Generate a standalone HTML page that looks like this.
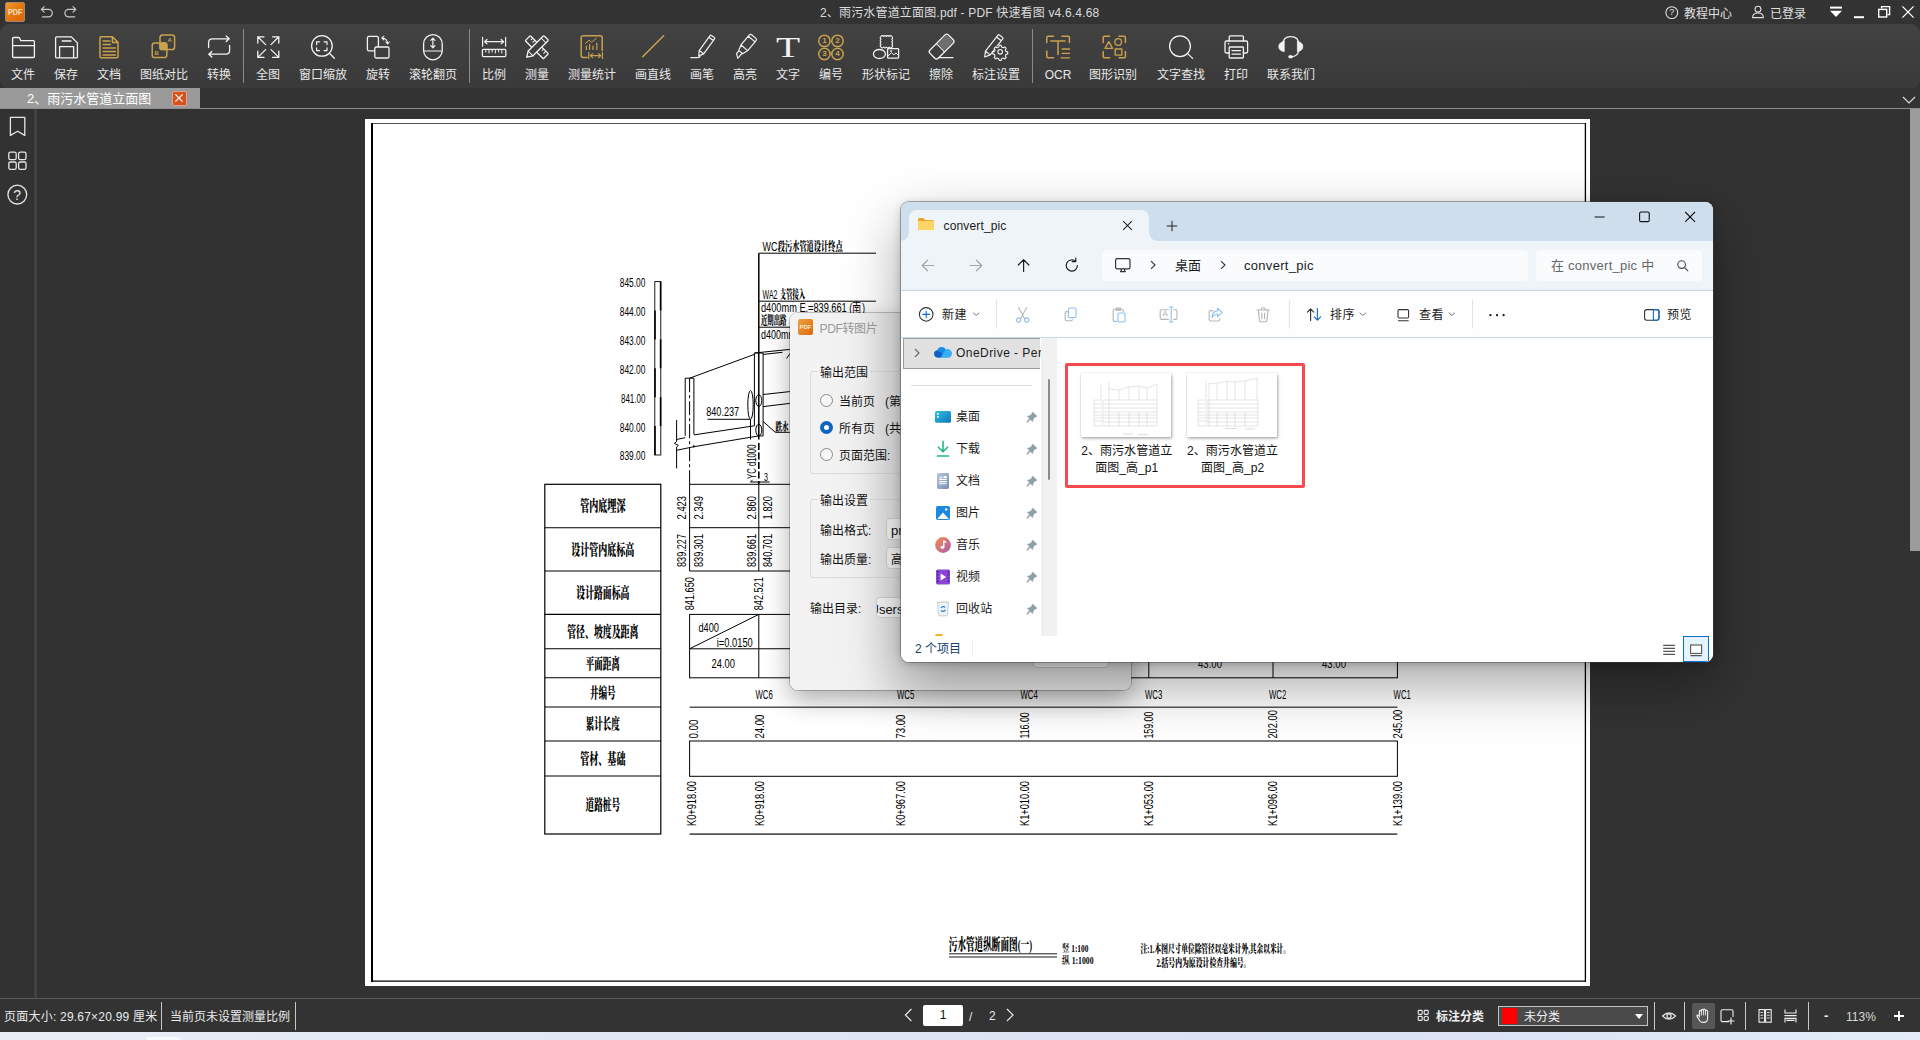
<!DOCTYPE html>
<html lang="zh-CN">
<head>
<meta charset="utf-8">
<title>PDF 快速看图</title>
<style>
*{box-sizing:border-box;margin:0;padding:0}
html,body{width:1920px;height:1040px;overflow:hidden;background:#323232}
body{position:relative;font-family:"Liberation Sans","Noto Sans CJK SC",sans-serif;font-size:12px;color:#e6e6e6}
.abs{position:absolute}
.t{position:absolute;white-space:nowrap;line-height:1}
svg{position:absolute;overflow:visible}
/* ---------- app chrome ---------- */
#titlebar{left:0;top:0;width:1920px;height:25px;background:#333333}
#toolbar{left:0;top:24px;width:1920px;height:64px;background:linear-gradient(#424242,#3a3a3a);border-radius:9px 9px 9px 9px}
#tabbar{left:0;top:88px;width:1920px;height:20px;background:#333333}
#tab{left:0;top:88px;width:200px;height:20px;background:#9a9a9a}
#tabline{left:0;top:108px;width:1920px;height:1px;background:#8e8e8e}
#sidebar{left:0;top:109px;width:34px;height:890px;background:#323232}
#sidesep{left:34px;top:109px;width:3px;height:890px;background:#414141}
#vscroll{left:1910px;top:109px;width:10px;height:442px;background:#9b9b9b}
#page{left:365px;top:119px;width:1225px;height:867px;background:#fff}
#statusline{left:0;top:998px;width:1920px;height:1px;background:#5a5a5a}
#statusbar{left:0;top:999px;width:1920px;height:33px;background:#333333}
#taskstrip{left:0;top:1032px;width:1920px;height:8px;background:linear-gradient(90deg,#e9eef6 0%,#dfe6f5 40%,#d9e1f4 70%,#e3ecf8 100%)}
.tbl{position:absolute;top:68.5px;font-size:12px;color:#e8e8e8;white-space:nowrap;line-height:12px;transform:translateX(-50%)}
.tsep{position:absolute;top:29px;width:1px;height:54px;background:#8a8a8a}
.ssep{position:absolute;top:1002px;width:1px;height:28px;background:#c8c8c8}
</style>
</head>
<body>
<!-- ===== APP CHROME ===== -->
<div id="titlebar" class="abs"></div>
<div id="toolbar" class="abs"></div>
<div id="tabbar" class="abs"></div>
<div id="tab" class="abs"></div>
<div id="tabline" class="abs"></div>
<div id="sidebar" class="abs"></div>
<div id="sidesep" class="abs"></div>
<div id="vscroll" class="abs"></div>
<div id="page" class="abs"></div>
<!-- ===== CAD DRAWING ===== -->
<svg style="left:0;top:0" width="1920" height="1040" viewBox="0 0 1920 1040" fill="none" stroke="#000" stroke-width="1">
<path d="M371 123.5 H1586" stroke="#555" stroke-width="1"/>
<path d="M372 123 V982" stroke-width="2"/>
<path d="M371 981.2 H1586 M1585.4 982 V123" stroke-width="1.3"/>
<rect x="654.8" y="281.6" width="6" height="173.4" stroke-width="0.9"/>
<path d="M660.6 281.6 V310.5" stroke-width="1.6"/>
<path d="M655.0 310.5 V339.4" stroke-width="1.6"/>
<path d="M660.6 339.4 V368.3" stroke-width="1.6"/>
<path d="M655.0 368.3 V397.2" stroke-width="1.6"/>
<path d="M660.6 397.2 V426.1" stroke-width="1.6"/>
<path d="M655.0 426.1 V455.0" stroke-width="1.6"/>
<text x="645.4" y="287.0" font-family="Liberation Sans, sans-serif" font-size="13.0" text-anchor="end" textLength="25.6" lengthAdjust="spacingAndGlyphs" fill="#000" stroke="none">845.00</text>
<text x="645.4" y="315.9" font-family="Liberation Sans, sans-serif" font-size="13.0" text-anchor="end" textLength="25.6" lengthAdjust="spacingAndGlyphs" fill="#000" stroke="none">844.00</text>
<text x="645.4" y="344.8" font-family="Liberation Sans, sans-serif" font-size="13.0" text-anchor="end" textLength="25.6" lengthAdjust="spacingAndGlyphs" fill="#000" stroke="none">843.00</text>
<text x="645.4" y="373.7" font-family="Liberation Sans, sans-serif" font-size="13.0" text-anchor="end" textLength="25.6" lengthAdjust="spacingAndGlyphs" fill="#000" stroke="none">842.00</text>
<text x="645.4" y="402.6" font-family="Liberation Sans, sans-serif" font-size="13.0" text-anchor="end" textLength="24.4" lengthAdjust="spacingAndGlyphs" fill="#000" stroke="none">841.00</text>
<text x="645.4" y="431.5" font-family="Liberation Sans, sans-serif" font-size="13.0" text-anchor="end" textLength="25.6" lengthAdjust="spacingAndGlyphs" fill="#000" stroke="none">840.00</text>
<text x="645.4" y="460.4" font-family="Liberation Sans, sans-serif" font-size="13.0" text-anchor="end" textLength="25.6" lengthAdjust="spacingAndGlyphs" fill="#000" stroke="none">839.00</text>
<path d="M758.8 253.2 H876 M758.8 301.2 H876 M758.8 327.2 H876" stroke-width="1"/>
<text x="762.5" y="250.6" font-family="Liberation Sans, sans-serif" font-size="13.0" text-anchor="start" textLength="15.0" lengthAdjust="spacingAndGlyphs" fill="#000" stroke="none">WC</text>
<text x="777.8" y="250.6" font-family="Liberation Serif, Noto Serif CJK SC, serif" font-weight="900" font-size="12.5" text-anchor="start" textLength="64.8" lengthAdjust="spacingAndGlyphs" fill="#000" stroke="none">段污水管道设计终点</text>
<text x="762.5" y="299.2" font-family="Liberation Sans, sans-serif" font-size="13.0" text-anchor="start" textLength="15.0" lengthAdjust="spacingAndGlyphs" fill="#000" stroke="none">WA2</text>
<text x="779.8" y="299.2" font-family="Liberation Serif, Noto Serif CJK SC, serif" font-weight="900" font-size="12.5" text-anchor="start" textLength="25.4" lengthAdjust="spacingAndGlyphs" fill="#000" stroke="none">支管接入</text>
<text x="761.0" y="312.4" font-family="Liberation Sans, sans-serif" font-size="12.5" text-anchor="start" textLength="104.0" lengthAdjust="spacingAndGlyphs" fill="#000" stroke="none">d400mm E.=839.661 (南)</text>
<text x="761.0" y="325.0" font-family="Liberation Serif, Noto Serif CJK SC, serif" font-weight="900" font-size="12.0" text-anchor="start" textLength="25.5" lengthAdjust="spacingAndGlyphs" fill="#000" stroke="none">近期出路</text>
<text x="761.0" y="338.8" font-family="Liberation Sans, sans-serif" font-size="12.5" text-anchor="start" textLength="35.0" lengthAdjust="spacingAndGlyphs" fill="#000" stroke="none">d400mm</text>
<path d="M758.8 253.2 V439.5" stroke-width="1.5"/>
<path d="M758.8 443 V484" stroke-width="1.6" stroke-dasharray="7 2.5"/>
<path d="M685.2 378.2 H693.9 M685.2 378.2 V435.9 M693.9 378.2 V434.4" />
<path d="M689.6 378.2 V484.3" stroke-width="1" stroke-dasharray="14 3 3 3"/>
<path d="M689.6 484.3 V571"/>
<path d="M689.6 378.2 L754.4 354.4 M754.4 353 L789.8 349.4 M763.1 354.4 L782.5 352.3 M786.6 358.4 L790 353.6"/>
<path d="M754.4 353 H763.1 M754.4 353 V425.8 M763.1 353 V435.9"/>
<path d="M693.9 434.9 L754.4 425.8 M676.6 450.3 L693.9 446.7 L758.8 435.9 H763.1 M676.6 439.5 L685.2 437.7 M693.9 444.8 V447.6"/>
<path d="M676.6 420 V441.6 L674.4 443.4 L678.4 445.4 L676.6 447 V468.4"/>
<path d="M707.6 419.3 H750.4 M750.5 419.3 V439.5"/>
<ellipse cx="750.5" cy="404.9" rx="2.7" ry="14.4"/>
<ellipse cx="758.8" cy="400.6" rx="3" ry="5.8"/><ellipse cx="758.8" cy="430.1" rx="3" ry="5.8"/>
<path d="M763.1 394.5 L789.8 391.6 M763.1 406.6 L789.8 403.4 M763.1 421.5 L775.3 432.3 H789.8"/>
<text x="706.2" y="416.4" font-family="Liberation Sans, sans-serif" font-size="13.0" text-anchor="start" textLength="33.0" lengthAdjust="spacingAndGlyphs" fill="#000" stroke="none">840.237</text>
<text x="775.6" y="431.4" font-family="Liberation Serif, Noto Serif CJK SC, serif" font-weight="900" font-size="11.5" text-anchor="start" textLength="13.0" lengthAdjust="spacingAndGlyphs" fill="#000" stroke="none">跌水</text>
<text x="756.2" y="479.0" font-family="Liberation Sans, sans-serif" font-size="12.5" text-anchor="start" textLength="34.5" lengthAdjust="spacingAndGlyphs" fill="#000" stroke="none" transform="rotate(-90 756.2 479.0)">YC d1000</text>
<text x="764.0" y="480.6" font-family="Liberation Sans, sans-serif" font-size="11.0" text-anchor="start" textLength="4.0" lengthAdjust="spacingAndGlyphs" fill="#000" stroke="none">3</text>
<path d="M750.4 482 H769.6 M750.4 482 L752.6 479.8"/>
<rect x="544.8" y="484.3" width="116" height="349.7" stroke-width="1.2"/>
<path d="M544.8 527.7 H660.8 M544.8 571.0 H660.8 M544.8 614.4 H660.8 M544.8 648.8 H660.8 M544.8 677.8 H660.8 M544.8 707.0 H660.8 M544.8 741.0 H660.8 M544.8 776.0 H660.8" stroke-width="1.1"/>
<text x="602.8" y="511.2" font-family="Liberation Serif, Noto Serif CJK SC, serif" font-weight="900" font-size="14.5" text-anchor="middle" textLength="45.3" lengthAdjust="spacingAndGlyphs" fill="#000" stroke="none">管内底埋深</text>
<text x="602.8" y="554.6" font-family="Liberation Serif, Noto Serif CJK SC, serif" font-weight="900" font-size="14.5" text-anchor="middle" textLength="63.0" lengthAdjust="spacingAndGlyphs" fill="#000" stroke="none">设计管内底标高</text>
<text x="602.8" y="597.9" font-family="Liberation Serif, Noto Serif CJK SC, serif" font-weight="900" font-size="14.5" text-anchor="middle" textLength="53.0" lengthAdjust="spacingAndGlyphs" fill="#000" stroke="none">设计路面标高</text>
<text x="602.8" y="636.8" font-family="Liberation Serif, Noto Serif CJK SC, serif" font-weight="900" font-size="14.5" text-anchor="middle" textLength="71.3" lengthAdjust="spacingAndGlyphs" fill="#000" stroke="none">管径、坡度及距离</text>
<text x="602.8" y="668.5" font-family="Liberation Serif, Noto Serif CJK SC, serif" font-weight="900" font-size="14.5" text-anchor="middle" textLength="34.0" lengthAdjust="spacingAndGlyphs" fill="#000" stroke="none">平面距离</text>
<text x="602.8" y="697.6" font-family="Liberation Serif, Noto Serif CJK SC, serif" font-weight="900" font-size="14.5" text-anchor="middle" textLength="25.5" lengthAdjust="spacingAndGlyphs" fill="#000" stroke="none">井编号</text>
<text x="602.8" y="729.2" font-family="Liberation Serif, Noto Serif CJK SC, serif" font-weight="900" font-size="14.5" text-anchor="middle" textLength="34.0" lengthAdjust="spacingAndGlyphs" fill="#000" stroke="none">累计长度</text>
<text x="602.8" y="763.7" font-family="Liberation Serif, Noto Serif CJK SC, serif" font-weight="900" font-size="14.5" text-anchor="middle" textLength="45.3" lengthAdjust="spacingAndGlyphs" fill="#000" stroke="none">管材、基础</text>
<text x="602.8" y="810.2" font-family="Liberation Serif, Noto Serif CJK SC, serif" font-weight="900" font-size="14.5" text-anchor="middle" textLength="34.6" lengthAdjust="spacingAndGlyphs" fill="#000" stroke="none">道路桩号</text>
<path d="M689.6 484.3 H1397.4 M689.6 527.7 H1397.4 M689.6 571 H1397.4"/>
<path d="M900.4 439.5 V571 M1024.5 439.5 V571 M1148.8 439.5 V571 M1273.0 439.5 V571 M1397.4 439.5 V571"/>
<path d="M758.8 484.3 V571"/>
<rect x="689.6" y="614.4" width="707.8" height="63.4"/>
<path d="M689.6 648.8 H758.8 L1397.4 647.2 M689.6 648.8 L758.8 614.4 M758.8 614.4 V677.8 M900.4 614.4 V677.8 M1024.5 614.4 V677.8 M1148.8 614.4 V677.8 M1273.0 614.4 V677.8"/>
<text x="686.4" y="519.4" font-family="Liberation Sans, sans-serif" font-size="12.5" text-anchor="start" textLength="23.4" lengthAdjust="spacingAndGlyphs" fill="#000" stroke="none" transform="rotate(-90 686.4 519.4)">2.423</text>
<text x="702.8" y="519.4" font-family="Liberation Sans, sans-serif" font-size="12.5" text-anchor="start" textLength="23.4" lengthAdjust="spacingAndGlyphs" fill="#000" stroke="none" transform="rotate(-90 702.8 519.4)">2.349</text>
<text x="756.1" y="519.4" font-family="Liberation Sans, sans-serif" font-size="12.5" text-anchor="start" textLength="23.4" lengthAdjust="spacingAndGlyphs" fill="#000" stroke="none" transform="rotate(-90 756.1 519.4)">2.860</text>
<text x="771.9" y="519.4" font-family="Liberation Sans, sans-serif" font-size="12.5" text-anchor="start" textLength="23.4" lengthAdjust="spacingAndGlyphs" fill="#000" stroke="none" transform="rotate(-90 771.9 519.4)">1.820</text>
<text x="686.4" y="567.0" font-family="Liberation Sans, sans-serif" font-size="12.5" text-anchor="start" textLength="33.0" lengthAdjust="spacingAndGlyphs" fill="#000" stroke="none" transform="rotate(-90 686.4 567.0)">839.227</text>
<text x="702.8" y="567.0" font-family="Liberation Sans, sans-serif" font-size="12.5" text-anchor="start" textLength="33.0" lengthAdjust="spacingAndGlyphs" fill="#000" stroke="none" transform="rotate(-90 702.8 567.0)">839.301</text>
<text x="756.1" y="567.0" font-family="Liberation Sans, sans-serif" font-size="12.5" text-anchor="start" textLength="33.0" lengthAdjust="spacingAndGlyphs" fill="#000" stroke="none" transform="rotate(-90 756.1 567.0)">839.661</text>
<text x="771.9" y="567.0" font-family="Liberation Sans, sans-serif" font-size="12.5" text-anchor="start" textLength="33.0" lengthAdjust="spacingAndGlyphs" fill="#000" stroke="none" transform="rotate(-90 771.9 567.0)">840.701</text>
<text x="693.7" y="610.2" font-family="Liberation Sans, sans-serif" font-size="12.5" text-anchor="start" textLength="33.0" lengthAdjust="spacingAndGlyphs" fill="#000" stroke="none" transform="rotate(-90 693.7 610.2)">841.650</text>
<text x="763.4" y="610.2" font-family="Liberation Sans, sans-serif" font-size="12.5" text-anchor="start" textLength="33.0" lengthAdjust="spacingAndGlyphs" fill="#000" stroke="none" transform="rotate(-90 763.4 610.2)">842.521</text>
<text x="698.4" y="632.0" font-family="Liberation Sans, sans-serif" font-size="12.5" text-anchor="start" textLength="20.6" lengthAdjust="spacingAndGlyphs" fill="#000" stroke="none">d400</text>
<text x="716.8" y="646.8" font-family="Liberation Sans, sans-serif" font-size="12.5" text-anchor="start" textLength="36.0" lengthAdjust="spacingAndGlyphs" fill="#000" stroke="none">i=0.0150</text>
<text x="711.5" y="668.4" font-family="Liberation Sans, sans-serif" font-size="12.5" text-anchor="start" textLength="23.4" lengthAdjust="spacingAndGlyphs" fill="#000" stroke="none">24.00</text>
<text x="1198.0" y="668.4" font-family="Liberation Sans, sans-serif" font-size="12.5" text-anchor="start" textLength="24.0" lengthAdjust="spacingAndGlyphs" fill="#000" stroke="none">43.00</text>
<text x="1322.0" y="668.4" font-family="Liberation Sans, sans-serif" font-size="12.5" text-anchor="start" textLength="24.0" lengthAdjust="spacingAndGlyphs" fill="#000" stroke="none">43.00</text>
<text x="755.5" y="698.8" font-family="Liberation Sans, sans-serif" font-size="13.0" text-anchor="start" textLength="17.2" lengthAdjust="spacingAndGlyphs" fill="#000" stroke="none">WC6</text>
<text x="897.0" y="698.8" font-family="Liberation Sans, sans-serif" font-size="13.0" text-anchor="start" textLength="17.2" lengthAdjust="spacingAndGlyphs" fill="#000" stroke="none">WC5</text>
<text x="1020.5" y="698.8" font-family="Liberation Sans, sans-serif" font-size="13.0" text-anchor="start" textLength="17.2" lengthAdjust="spacingAndGlyphs" fill="#000" stroke="none">WC4</text>
<text x="1145.0" y="698.8" font-family="Liberation Sans, sans-serif" font-size="13.0" text-anchor="start" textLength="17.2" lengthAdjust="spacingAndGlyphs" fill="#000" stroke="none">WC3</text>
<text x="1269.0" y="698.8" font-family="Liberation Sans, sans-serif" font-size="13.0" text-anchor="start" textLength="17.2" lengthAdjust="spacingAndGlyphs" fill="#000" stroke="none">WC2</text>
<text x="1393.6" y="698.8" font-family="Liberation Sans, sans-serif" font-size="13.0" text-anchor="start" textLength="17.2" lengthAdjust="spacingAndGlyphs" fill="#000" stroke="none">WC1</text>
<path d="M689.6 707.3 H1397.4 M689.6 834.1 H1397.4" stroke="#555" stroke-width="1.6"/>
<rect x="689.6" y="741" width="707.8" height="35.3"/>
<text x="697.9" y="738.6" font-family="Liberation Sans, sans-serif" font-size="12.5" text-anchor="start" textLength="19.0" lengthAdjust="spacingAndGlyphs" fill="#000" stroke="none" transform="rotate(-90 697.9 738.6)">0.00</text>
<text x="763.9" y="738.6" font-family="Liberation Sans, sans-serif" font-size="12.5" text-anchor="start" textLength="24.0" lengthAdjust="spacingAndGlyphs" fill="#000" stroke="none" transform="rotate(-90 763.9 738.6)">24.00</text>
<text x="905.4" y="738.6" font-family="Liberation Sans, sans-serif" font-size="12.5" text-anchor="start" textLength="24.0" lengthAdjust="spacingAndGlyphs" fill="#000" stroke="none" transform="rotate(-90 905.4 738.6)">73.00</text>
<text x="1028.9" y="738.6" font-family="Liberation Sans, sans-serif" font-size="12.5" text-anchor="start" textLength="26.4" lengthAdjust="spacingAndGlyphs" fill="#000" stroke="none" transform="rotate(-90 1028.9 738.6)">116.00</text>
<text x="1153.4" y="738.6" font-family="Liberation Sans, sans-serif" font-size="12.5" text-anchor="start" textLength="27.0" lengthAdjust="spacingAndGlyphs" fill="#000" stroke="none" transform="rotate(-90 1153.4 738.6)">159.00</text>
<text x="1277.4" y="738.6" font-family="Liberation Sans, sans-serif" font-size="12.5" text-anchor="start" textLength="28.5" lengthAdjust="spacingAndGlyphs" fill="#000" stroke="none" transform="rotate(-90 1277.4 738.6)">202.00</text>
<text x="1402.4" y="738.6" font-family="Liberation Sans, sans-serif" font-size="12.5" text-anchor="start" textLength="29.0" lengthAdjust="spacingAndGlyphs" fill="#000" stroke="none" transform="rotate(-90 1402.4 738.6)">245.00</text>
<text x="695.9" y="826.0" font-family="Liberation Sans, sans-serif" font-size="12.5" text-anchor="start" textLength="45.0" lengthAdjust="spacingAndGlyphs" fill="#000" stroke="none" transform="rotate(-90 695.9 826.0)">K0+918.00</text>
<text x="763.9" y="826.0" font-family="Liberation Sans, sans-serif" font-size="12.5" text-anchor="start" textLength="45.0" lengthAdjust="spacingAndGlyphs" fill="#000" stroke="none" transform="rotate(-90 763.9 826.0)">K0+918.00</text>
<text x="905.4" y="826.0" font-family="Liberation Sans, sans-serif" font-size="12.5" text-anchor="start" textLength="45.0" lengthAdjust="spacingAndGlyphs" fill="#000" stroke="none" transform="rotate(-90 905.4 826.0)">K0+967.00</text>
<text x="1028.9" y="826.0" font-family="Liberation Sans, sans-serif" font-size="12.5" text-anchor="start" textLength="45.0" lengthAdjust="spacingAndGlyphs" fill="#000" stroke="none" transform="rotate(-90 1028.9 826.0)">K1+010.00</text>
<text x="1153.4" y="826.0" font-family="Liberation Sans, sans-serif" font-size="12.5" text-anchor="start" textLength="45.0" lengthAdjust="spacingAndGlyphs" fill="#000" stroke="none" transform="rotate(-90 1153.4 826.0)">K1+053.00</text>
<text x="1277.4" y="826.0" font-family="Liberation Sans, sans-serif" font-size="12.5" text-anchor="start" textLength="45.0" lengthAdjust="spacingAndGlyphs" fill="#000" stroke="none" transform="rotate(-90 1277.4 826.0)">K1+096.00</text>
<text x="1402.4" y="826.0" font-family="Liberation Sans, sans-serif" font-size="12.5" text-anchor="start" textLength="45.0" lengthAdjust="spacingAndGlyphs" fill="#000" stroke="none" transform="rotate(-90 1402.4 826.0)">K1+139.00</text>
<text x="948.8" y="949.8" font-family="Liberation Serif, Noto Serif CJK SC, serif" font-weight="900" font-size="15.5" text-anchor="start" textLength="83.2" lengthAdjust="spacingAndGlyphs" fill="#000" stroke="none">污水管道纵断面图(一)</text>
<path d="M949 953.8 H1057 M949 957 H1057" stroke-width="0.9"/>
<text x="1062.0" y="951.8" font-family="Liberation Serif, Noto Serif CJK SC, serif" font-weight="700" font-size="10.5" text-anchor="start" textLength="26.4" lengthAdjust="spacingAndGlyphs" fill="#000" stroke="none">竖 1:100</text>
<text x="1062.0" y="963.6" font-family="Liberation Serif, Noto Serif CJK SC, serif" font-weight="700" font-size="10.5" text-anchor="start" textLength="31.5" lengthAdjust="spacingAndGlyphs" fill="#000" stroke="none">纵 1:1000</text>
<text x="1140.6" y="953.4" font-family="Liberation Serif, Noto Serif CJK SC, serif" font-weight="900" font-size="11.5" text-anchor="start" textLength="149.4" lengthAdjust="spacingAndGlyphs" fill="#000" stroke="none">注:1.本图尺寸单位除管径以毫米计外,其余以米计。</text>
<text x="1156.4" y="967.4" font-family="Liberation Serif, Noto Serif CJK SC, serif" font-weight="900" font-size="11.5" text-anchor="start" textLength="94.0" lengthAdjust="spacingAndGlyphs" fill="#000" stroke="none">2.括号内为原设计检查井编号。</text>
</svg>

<!-- ===== TITLE BAR ===== -->
<div class="abs" style="left:5px;top:2px;width:20px;height:20px;border-radius:2px;background:linear-gradient(135deg,#f29a2c 0%,#e8780e 45%,#d8640a 100%);border:1px solid #9a8a76"></div>
<div class="t" style="left:8px;top:8px;font-size:9px;font-weight:bold;color:#f6e4c8;letter-spacing:0px;transform:scaleX(0.8);transform-origin:0 0">PDF</div>
<svg style="left:38px;top:4px" width="40" height="16" viewBox="0 0 40 16" fill="none" stroke="#c9c9c9" stroke-width="1.2" stroke-linecap="round" stroke-linejoin="round">
  <path d="M6.2 2.6 L3.4 5.4 L6.2 8.2 M3.6 5.4 H10.6 A3.6 3.6 0 0 1 10.6 12.8 H4.4"/>
  <path d="M35 2.6 L37.8 5.4 L35 8.2 M37.6 5.4 H30.6 A3.6 3.6 0 0 0 30.6 12.8 H36.8"/>
</svg>
<div id="ttl" class="t" style="left:820px;top:6.5px;font-size:12px;line-height:12px;color:#dcdcdc;letter-spacing:0.17px">2、雨污水管道立面图.pdf - PDF 快速看图 v4.6.4.68</div>
<svg style="left:1660px;top:0" width="260" height="25" viewBox="0 0 260 25" fill="none" stroke="#e0e0e0" stroke-width="1.1">
  <circle cx="11.8" cy="12.6" r="5.9"/>
  <circle cx="98" cy="9.2" r="2.9"/>
  <path d="M92.6 17.6 Q92.6 13 98 13 Q103.4 13 103.4 17.6 Z" stroke-linejoin="round"/>
  <rect x="170" y="6.6" width="12" height="2" fill="#fff" stroke="none"/>
  <path d="M170 10.8 H182 L176 17 Z" fill="#fff" stroke="none"/>
  <rect x="194" y="16.2" width="10" height="2" fill="#fff" stroke="none"/>
  <path d="M221.6 8.6 V6.6 H229.6 V14.6 H227.4" stroke="#fff" stroke-width="1.4"/>
  <rect x="218.7" y="9.4" width="8" height="7.6" stroke="#fff" stroke-width="1.4"/>
  <path d="M242.4 6.4 L253.6 17.6 M253.6 6.4 L242.4 17.6" stroke="#fff" stroke-width="1.3"/>
</svg>
<div class="t" style="left:1684px;top:7.5px;font-size:12px;line-height:12px;color:#e0e0e0">教程中心</div>
<div class="t" style="left:1770px;top:7.5px;font-size:12px;line-height:12px;color:#e0e0e0">已登录</div>
<!-- tab -->
<div class="t" style="left:27px;top:92px;font-size:13px;line-height:13px;color:#ffffff">2、雨污水管道立面图</div>
<div class="abs" style="left:171.5px;top:90.5px;width:15px;height:15px;background:#d4521c;border:1px solid #e8a090;border-radius:2px"></div>
<svg style="left:172px;top:91px" width="14" height="14" viewBox="0 0 14 14" stroke="#fff" stroke-width="1.3"><path d="M3.4 3.4 L10.6 10.6 M10.6 3.4 L3.4 10.6"/></svg>
<svg style="left:1902px;top:95px" width="14" height="10" viewBox="0 0 14 10" fill="none" stroke="#e0e0e0" stroke-width="1.1"><path d="M1 2 L7 8 L13 2"/></svg>
<div class="t" style="left:1669.3px;top:8.2px;font-size:9px;line-height:9px;color:#e0e0e0">?</div>

<!-- ===== TOOLBAR ICONS ===== -->
<svg style="left:0;top:0" width="1920" height="88" viewBox="0 0 1920 88" fill="none" stroke="#f2f2f2" stroke-width="1.3" stroke-linecap="round" stroke-linejoin="round">
  <defs><pattern id="erdots" width="2" height="2" patternUnits="userSpaceOnUse" stroke="none"><rect width="2" height="2" fill="#4c4c4c"/><circle cx="1" cy="1" r="0.6" fill="#e8e8e8"/></pattern></defs>
  <!-- file -->
  <path d="M12.6 38.5 Q12.6 37.5 13.6 37.5 H18.4 Q19.2 37.5 19.7 38.3 L20.8 40.6 H33.4 Q34.4 40.6 34.4 41.6 V56.5 Q34.4 57.5 33.4 57.5 H13.6 Q12.6 57.5 12.6 56.5 Z M12.6 45.6 H34.4"/>
  <!-- save -->
  <path d="M56.6 36.9 H71.4 L77.4 42.9 V56.9 Q77.4 57.9 76.4 57.9 H56.6 Q55.6 57.9 55.6 56.9 V37.9 Q55.6 36.9 56.6 36.9 Z M59.6 57.9 V46.6 H73.6 V57.9 M62.2 41 H71"/>
  <!-- doc (gold) -->
  <g stroke="#c9a24d" stroke-width="1.5">
    <path d="M101 36.8 H112.4 L118 42.4 V56.7 Q118 57.7 117 57.7 H101 Q100 57.7 100 56.7 V37.8 Q100 36.8 101 36.8 Z M112.4 37 V42.4 H117.8"/>
    <path d="M103 41 H110 M103 44.5 H110.6 M103 48 H115.4 M103 51.5 H115.4 M103 55 H115.4" stroke-width="1.3"/>
  </g>
  <!-- compare (gold) -->
  <g stroke="#c9a24d" stroke-width="1.5">
    <rect x="160" y="35" width="14.6" height="14.6" rx="2.6"/>
    <rect x="152.2" y="43" width="14.6" height="14.6" rx="2.6"/>
    <rect x="160" y="43" width="6.8" height="6.6" rx="1.4" fill="#c9a24d"/>
  </g>
  <!-- convert -->
  <path d="M208.6 47.6 V42.4 Q208.6 38.8 212.2 38.8 H229 M226.2 36 L229.2 38.8 L226.2 41.6"/>
  <path d="M229.6 45.4 V50.6 Q229.6 54.2 226 54.2 H209 M211.8 51.4 L208.8 54.2 L211.8 57"/>
  <!-- full view -->
  <path d="M257.8 43 V36.8 H264 M257.8 36.8 L265.6 44.6 M272.6 36.8 H278.8 V43 M278.8 36.8 L271 44.6 M257.8 51.2 V57.4 H264 M257.8 57.4 L265.6 49.6 M272.6 57.4 H278.8 V51.2 M278.8 57.4 L271 49.6"/>
  <!-- window zoom -->
  <circle cx="321.9" cy="45.9" r="10.3"/>
  <path d="M329.4 53.2 L334.4 58.2"/>
  <path d="M316.6 44.6 V41.8 H319.6 M324 41.8 H327 V44.6 M327 47.8 V50.6 H324 M319.6 50.6 H316.6 V47.8" stroke-width="1.2"/>
  <!-- rotate -->
  <rect x="367.4" y="36.4" width="11" height="14.4" rx="1.6"/>
  <rect x="374.8" y="47" width="14.2" height="11" rx="1.6" fill="#3e3e3e"/>
  <path d="M382 38 Q387.4 38.4 387.6 43.8 M383.8 36.4 L381.8 38 L383.8 39.8 M385.8 42 L387.6 44 L389.2 42" stroke-width="1.1"/>
  <!-- wheel page -->
  <rect x="423.6" y="34.6" width="18.6" height="25.2" rx="9.3"/>
  <path d="M423.8 51 H442 M432.9 38.4 V47.6 M430.8 40.4 L432.9 38.2 L435 40.4 M430.8 45.6 L432.9 47.8 L435 45.6" stroke-width="1.2"/>
  <!-- scale -->
  <path d="M482.6 37.4 V46.2 M505.6 37.4 V46.2 M484.6 41.7 H503.6 M487 39.5 L484.6 41.7 L487 43.9 M501.2 39.5 L503.6 41.7 L501.2 43.9" stroke-width="1.2"/>
  <rect x="482.4" y="49.4" width="23.4" height="7.2" rx="1"/>
  <path d="M485.8 49.6 V52 M489 49.6 V53 M492.2 49.6 V52 M495.4 49.6 V53 M498.6 49.6 V52 M501.8 49.6 V53" stroke-width="1"/>
  <!-- measure -->
  <g transform="rotate(45 536.8 47.2)">
    <rect x="524" y="43.6" width="25.6" height="7.2" rx="0.8"/>
    <path d="M527.5 43.8 V46 M530.5 43.8 V46.6 M543 43.8 V46 M546 43.8 V46.6" stroke-width="1"/>
  </g>
  <g transform="rotate(-45 536.8 47.2)">
    <path d="M528 43.8 H549 Q550 43.8 550 44.8 V49.6 Q550 50.6 549 50.6 H528 L522.6 47.2 Z" fill="#3e3e3e"/>
    <path d="M528 43.8 V50.6 M546.4 43.8 V50.6" stroke-width="1"/>
  </g>
  <!-- measure stats (gold) -->
  <g stroke="#c9a24d" stroke-width="1.5">
    <path d="M587 57.4 H583.2 Q581.2 57.4 581.2 55.4 V37.8 Q581.2 35.8 583.2 35.8 H600.2 Q602.2 35.8 602.2 37.8 V50.6"/>
    <path d="M588.8 52.6 V58.4 M602.4 52.6 V58.4 M590.6 55.6 H600.6 M592.6 53.6 L590.4 55.6 L592.6 57.6 M598.6 53.6 L600.8 55.6 L598.6 57.6" stroke-width="1.2"/>
    <path d="M586.4 46 V49.4 M589.6 44.4 V49.4 M593 46 V49.4 M596.8 43 V49.4" stroke-width="1.2"/>
    <path d="M585.4 43.4 L589 40.2 L591.6 42.2 L596.2 38.4" stroke-width="1"/>
  </g>
  <!-- line (gold) -->
  <path d="M642.6 56.8 L663.6 35.8" stroke="#c9a24d" stroke-width="1.5"/>
  <!-- pen -->
  <path d="M690.8 57.6 H697 Q698.6 57.6 700 56.6"/>
  <g transform="rotate(-54 705.8 46.2)">
    <path d="M698.4 43.4 H716.8 Q717.8 43.4 717.8 44.4 V48 Q717.8 49 716.8 49 H698.4 L693.8 46.2 Z M698.4 43.4 V49 M714.8 43.4 V49" stroke-width="1.2"/>
  </g>
  <!-- highlighter -->
  <g transform="rotate(-50 745 47)">
    <path d="M744 42.6 H757 Q758.6 42.6 758.6 44.2 V49.8 Q758.6 51.4 757 51.4 H744 L738.4 49.6 V44.4 Z M738.4 44.8 H734.4 L731.6 48.8 H738.4 M744 42.6 V51.4 M755.4 42.6 V51.4" stroke-width="1.2"/>
  </g>
  <!-- numbering (gold) -->
  <g stroke="#c9a24d" stroke-width="1.5">
    <circle cx="824.4" cy="40.9" r="5.7"/><circle cx="837.5" cy="40.9" r="5.7"/>
    <circle cx="824.4" cy="54" r="5.7"/><circle cx="837.5" cy="54" r="5.7"/>
  </g>
  <!-- shape marks -->
  <path d="M881.0 36.4 q1.4 -1.6 2.7 0 q1.4 -1.6 2.7 0 q1.4 -1.6 2.7 0 q1.4 -1.6 2.7 0 q1.6 1.4 0 2.7 q1.6 1.4 0 2.7 q1.6 1.4 0 2.7 q1.6 1.4 0 2.7 q-1.4 1.6 -2.7 0 q-1.4 1.6 -2.7 0 q-1.4 1.6 -2.7 0 q-1.4 1.6 -2.7 0 q-1.6 -1.4 0 -2.7 q-1.6 -1.4 0 -2.7 q-1.6 -1.4 0 -2.7 q-1.6 -1.4 0 -2.7 Z" stroke-width="1.1"/>
  <ellipse cx="879.4" cy="54" rx="6" ry="4.5"/>
  <rect x="887.6" y="48.6" width="11" height="9.6" rx="0.8"/>
  <path d="M888 56 L891.4 52.6 L893.8 54.8 L896 53 L898.4 55.4" stroke-width="1"/>
  <circle cx="891" cy="51" r="0.6" fill="#f2f2f2" stroke-width="0.6"/>
  <!-- eraser -->
  <g transform="rotate(-45 941.6 46.6)">
    <rect x="928.6" y="40.8" width="26" height="11.6" rx="2.4"/>
    <path d="M940 40.8 V52.4" stroke-width="1"/>
    <rect x="940.6" y="41.6" width="13" height="10" rx="1.8" fill="url(#erdots)" stroke="none"/>
  </g>
  <path d="M938.6 57.6 H953"/>
  <!-- annotation settings -->
  <g transform="rotate(-52 993 46.4)">
    <path d="M984.6 43.4 H1005 Q1006 43.4 1006 44.4 V48.4 Q1006 49.4 1005 49.4 H984.6 L979.6 46.4 Z M984.6 43.4 V49.4 M1002.6 43.4 V49.4" stroke-width="1.2"/>
  </g>
  <circle cx="1000.2" cy="51.8" r="6.6" fill="#3e3e3e" stroke="none"/>
  <path d="M999.2 45.4 h2 l0.5 1.7 l1.5 0.7 l1.6 -0.9 l1.4 1.4 l-0.9 1.6 l0.7 1.5 l1.7 0.5 v2 l-1.7 0.5 l-0.7 1.5 l0.9 1.6 l-1.4 1.4 l-1.6 -0.9 l-1.5 0.7 l-0.5 1.7 h-2 l-0.5 -1.7 l-1.5 -0.7 l-1.6 0.9 l-1.4 -1.4 l0.9 -1.6 l-0.7 -1.5 l-1.7 -0.5 v-2 l1.7 -0.5 l0.7 -1.5 l-0.9 -1.6 l1.4 -1.4 l1.6 0.9 l1.5 -0.7 Z" stroke-width="1.1"/>
  <circle cx="1000.2" cy="51.8" r="2.3" stroke-width="1.1"/>
  <!-- OCR (gold) -->
  <g stroke="#c9a24d" stroke-width="1.5">
    <path d="M1046.8 42.6 V37.4 Q1046.8 36.2 1048 36.2 H1053.6 M1062 36.2 H1068.2 Q1069.4 36.2 1069.4 37.4 V42.6 M1046.8 51 V56.6 Q1046.8 57.8 1048 57.8 H1053.6"/>
    <path d="M1050.8 41 H1065 M1058 41 V54.6"/>
    <path d="M1062.2 49 H1069.6 M1062.2 53.4 H1069.6 M1061 57.8 H1069.6" stroke-width="1.3"/>
  </g>
  <!-- shape recognition (gold) -->
  <g stroke="#c9a24d" stroke-width="1.5">
    <path d="M1103.2 42.6 V37.4 Q1103.2 36.2 1104.4 36.2 H1109.6 M1119 36.2 H1124.2 Q1125.4 36.2 1125.4 37.4 V42.6 M1103.2 51.4 V56.6 Q1103.2 57.8 1104.4 57.8 H1109.6 M1119 57.8 H1124.2 Q1125.4 57.8 1125.4 56.6 V51.4"/>
    <path d="M1108.8 41.6 L1112.6 48.4 H1105 Z" stroke-width="1.3"/>
    <circle cx="1118.2" cy="42" r="3.3" stroke-width="1.3"/>
    <rect x="1115.2" y="49" width="6.6" height="6.2" stroke-width="1.3"/>
  </g>
  <!-- search -->
  <circle cx="1180" cy="46.2" r="10.4"/>
  <path d="M1187.6 53.6 L1192.6 58.4"/>
  <!-- print -->
  <path d="M1229.2 41 V36.8 Q1229.2 35.8 1230.2 35.8 H1242.4 Q1243.4 35.8 1243.4 36.8 V41"/>
  <path d="M1229.2 53 H1226.6 Q1225 53 1225 51.4 V42.6 Q1225 41 1226.6 41 H1246 Q1247.6 41 1247.6 42.6 V51.4 Q1247.6 53 1246 53 H1243.4"/>
  <rect x="1229.2" y="47" width="14.2" height="11" rx="0.8"/>
  <path d="M1232 50.6 H1240.6 M1232 54.2 H1240.6" stroke-width="1.2"/>
  <circle cx="1228.4" cy="43.8" r="0.5" fill="#f2f2f2" stroke-width="0.5"/>
  <!-- contact -->
  <path d="M1282.6 48 V45.4 Q1282.6 36.6 1290.8 36.6 Q1299 36.6 1299 45.4 V48"/>
  <path d="M1284.2 41.6 V51.6 Q1278.8 50.8 1278.8 46.6 Q1278.8 42.4 1284.2 41.6 Z M1297.4 41.6 V51.6 Q1302.8 50.8 1302.8 46.6 Q1302.8 42.4 1297.4 41.6 Z" fill="#f2f2f2" stroke-width="0.8"/>
  <path d="M1298.6 51 Q1297.6 56.4 1291.4 56.8"/>
  <rect x="1288.6" y="55.6" width="4" height="2.4" rx="1.2" fill="#f2f2f2" stroke-width="0.6"/>
</svg>
<div class="t" style="left:167.6px;top:36.6px;font-size:6px;line-height:6px;font-weight:bold;color:#c9a24d">A</div>
<div class="t" style="left:154.6px;top:50.2px;font-size:6px;line-height:6px;font-weight:bold;color:#c9a24d">B</div>
<div class="t" style="left:776px;top:33px;font-family:'Liberation Serif',serif;font-size:29px;line-height:29px;color:#f2f2f2;transform:scaleX(1.36);transform-origin:0 0">T</div>
<div class="t" style="left:822.2px;top:37.4px;font-size:8px;line-height:8px;font-weight:bold;color:#c9a24d">1</div>
<div class="t" style="left:835.3px;top:37.4px;font-size:8px;line-height:8px;font-weight:bold;color:#c9a24d">2</div>
<div class="t" style="left:822.2px;top:50.4px;font-size:8px;line-height:8px;font-weight:bold;color:#c9a24d">3</div>
<div class="t" style="left:835.3px;top:50.4px;font-size:8px;line-height:8px;font-weight:bold;color:#c9a24d">4</div>
<div class="tsep" style="left:243px"></div>
<div class="tsep" style="left:469px"></div>
<div class="tsep" style="left:1032px"></div>
<div class="tbl" style="left:23px">文件</div>
<div class="tbl" style="left:66px">保存</div>
<div class="tbl" style="left:109px">文档</div>
<div class="tbl" style="left:164px">图纸对比</div>
<div class="tbl" style="left:219px">转换</div>
<div class="tbl" style="left:268px">全图</div>
<div class="tbl" style="left:323px">窗口缩放</div>
<div class="tbl" style="left:378px">旋转</div>
<div class="tbl" style="left:433px">滚轮翻页</div>
<div class="tbl" style="left:494px">比例</div>
<div class="tbl" style="left:537px">测量</div>
<div class="tbl" style="left:592px">测量统计</div>
<div class="tbl" style="left:653px">画直线</div>
<div class="tbl" style="left:702px">画笔</div>
<div class="tbl" style="left:745px">高亮</div>
<div class="tbl" style="left:788px">文字</div>
<div class="tbl" style="left:831px">编号</div>
<div class="tbl" style="left:886px">形状标记</div>
<div class="tbl" style="left:941px">擦除</div>
<div class="tbl" style="left:996px">标注设置</div>
<div class="tbl" style="left:1058px">OCR</div>
<div class="tbl" style="left:1113px">图形识别</div>
<div class="tbl" style="left:1181px">文字查找</div>
<div class="tbl" style="left:1236px">打印</div>
<div class="tbl" style="left:1291px">联系我们</div>

<!-- ===== LEFT SIDEBAR ICONS ===== -->
<svg style="left:0;top:109px" width="34" height="110" viewBox="0 109 34 110" fill="none" stroke="#e6e6e6" stroke-width="1.3" stroke-linejoin="round">
  <path d="M10.4 117.4 H24.8 V135.4 L17.6 131.2 L10.4 135.4 Z"/>
  <rect x="8.8" y="152.2" width="7.4" height="7.4" rx="1.6"/><rect x="18.6" y="152.2" width="7.4" height="7.4" rx="1.6"/>
  <rect x="8.8" y="162" width="7.4" height="7.4" rx="1.6"/><rect x="18.6" y="162" width="7.4" height="7.4" rx="1.6"/>
  <circle cx="17.3" cy="194.6" r="9.4"/>
</svg>
<div class="t" style="left:13.2px;top:188.2px;font-size:14px;line-height:14px;color:#e6e6e6">?</div>

<div id="statusline" class="abs"></div>
<div id="statusbar" class="abs"></div>
<div id="taskstrip" class="abs"></div>
<!-- ===== STATUS BAR ===== -->
<div class="t" style="left:4px;top:1011px;font-size:12px;line-height:12px;color:#eaeaea;letter-spacing:0.22px">页面大小: 29.67×20.99 厘米</div>
<div class="ssep" style="left:161px"></div>
<div class="t" style="left:170px;top:1011px;font-size:12px;line-height:12px;color:#eaeaea">当前页未设置测量比例</div>
<div class="ssep" style="left:295px"></div>
<svg style="left:900px;top:1005px" width="120" height="22" viewBox="900 1005 120 22" fill="none" stroke="#e8e8e8" stroke-width="1.2"><path d="M911.4 1009 L905.4 1015 L911.4 1021 M1007 1009 L1013 1015 L1007 1021"/></svg>
<div class="abs" style="left:923px;top:1005px;width:40px;height:21px;background:#fff;border-radius:2px"></div>
<div class="t" style="left:923px;top:1009px;width:40px;text-align:center;font-size:12px;line-height:12px;color:#111">1</div>
<div class="t" style="left:969px;top:1011px;font-size:12px;line-height:12px;color:#e8e8e8">/</div>
<div class="t" style="left:989px;top:1010px;font-size:12px;line-height:12px;color:#e8e8e8">2</div>
<svg style="left:1416px;top:1008px" width="16" height="16" viewBox="1416 1008 16 16" fill="none" stroke="#e8e8e8" stroke-width="1.1">
  <rect x="1418.2" y="1010.4" width="4" height="4" rx="0.8"/><rect x="1424.2" y="1010.4" width="4" height="4" rx="0.8"/>
  <rect x="1418.2" y="1016.4" width="4" height="4" rx="0.8"/><circle cx="1426.2" cy="1018.4" r="2.2"/>
</svg>
<div class="t" style="left:1436px;top:1011px;font-size:12px;line-height:12px;font-weight:bold;color:#efefef">标注分类</div>
<div class="abs" style="left:1498px;top:1006px;width:150px;height:20px;background:#4a4a4a;border:1px solid #c4c4c4"></div>
<div class="abs" style="left:1502px;top:1008px;width:15px;height:16px;background:#ff0000"></div>
<div class="t" style="left:1524px;top:1011px;font-size:12px;line-height:12px;color:#efefef">未分类</div>
<svg style="left:1634px;top:1013px" width="10" height="7" viewBox="0 0 10 7"><path d="M1 1 H9 L5 6 Z" fill="#fff"/></svg>
<div class="ssep" style="left:1654px"></div>
<svg style="left:1660px;top:1004px" width="250" height="24" viewBox="1660 1004 250 24" fill="none" stroke="#e8e8e8" stroke-width="1.2" stroke-linejoin="round" stroke-linecap="round">
  <path d="M1662.6 1016 Q1669 1009.6 1675.6 1016 Q1669 1022.4 1662.6 1016 Z"/><circle cx="1669" cy="1016" r="2.1"/>
</svg>
<div class="ssep" style="left:1684px"></div>
<div class="abs" style="left:1692px;top:1003px;width:23px;height:26px;background:#565656;border-radius:2px"></div>
<svg style="left:1690px;top:1004px" width="50" height="24" viewBox="1690 1004 50 24" fill="none" stroke="#f0f0f0" stroke-width="1.1" stroke-linejoin="round" stroke-linecap="round">
  <path d="M1699.4 1017 V1011.4 Q1699.4 1010.4 1700.4 1010.4 Q1701.4 1010.4 1701.4 1011.4 V1010.2 Q1701.4 1009.2 1702.4 1009.2 Q1703.4 1009.2 1703.4 1010.2 V1010 Q1703.4 1009 1704.4 1009 Q1705.4 1009 1705.4 1010 V1011 Q1705.4 1010.2 1706.4 1010.2 Q1707.6 1010.2 1707.6 1011.2 V1018 Q1707.6 1022.4 1703.8 1022.4 H1702.6 Q1700.6 1022.4 1699.4 1020.2 L1697 1016.4 Q1696.6 1015.4 1697.6 1015 Q1698.4 1014.8 1699.4 1016.4"/>
  <path d="M1701.4 1011.4 V1015 M1703.4 1010.2 V1015 M1705.4 1011 V1015" stroke-width="0.9"/>
  <path d="M1728.6 1021.6 H1722.4 Q1721 1021.6 1721 1020.2 V1011.2 Q1721 1009.8 1722.4 1009.8 H1731.6 Q1733 1009.8 1733 1011.2 V1016.4"/>
  <path d="M1731 1018 V1024 M1728 1021 H1734" stroke-width="1.2"/>
</svg>
<div class="ssep" style="left:1745px"></div>
<svg style="left:1755px;top:1004px" width="50" height="24" viewBox="1755 1004 50 24" fill="none" stroke="#f0f0f0" stroke-width="1.1">
  <rect x="1759" y="1009.6" width="5.6" height="12.6"/><rect x="1765.6" y="1009.6" width="5.6" height="12.6"/>
  <path d="M1760.4 1012.4 H1763.2 M1760.4 1015.2 H1763.2 M1760.4 1018 H1763.2 M1767 1012.4 H1769.8 M1767 1015.2 H1769.8 M1767 1018 H1769.8" stroke-width="0.9"/>
  <path d="M1785 1009.4 V1013 H1796 V1009.4 M1784.4 1015.6 H1796.6 M1785 1022.6 V1018.4 H1796 V1022.6 M1786.4 1020.4 H1794.6" stroke-width="1.1"/>
</svg>
<div class="ssep" style="left:1808px"></div>
<div class="t" style="left:1824px;top:1009px;font-size:13px;line-height:13px;font-weight:bold;color:#f0f0f0">-</div>
<div class="t" style="left:1846px;top:1011px;font-size:12px;line-height:12px;color:#d8d8d8">113%</div>
<svg style="left:1893px;top:1010px" width="12" height="12" viewBox="0 0 12 12" stroke="#fff" stroke-width="1.8"><path d="M1 6 H11 M6 1 V11"/></svg>
<div id="taskitem" class="abs" style="left:146px;top:1037px;width:35px;height:6px;background:#f6f9fd;border-radius:3px"></div>

<!-- ===== PDF-to-image DIALOG (behind explorer) ===== -->
<div class="abs" style="left:790px;top:313px;width:341px;height:377px;background:linear-gradient(90deg,#f3f3f3 0%,#f1f1f1 20%,#e6e6e6 32%);border-radius:8px;box-shadow:0 0 0 1px rgba(0,0,0,.22),0 10px 26px rgba(0,0,0,.32);color:#111;font-size:12px">
  <div class="abs" style="left:8px;top:6px;width:15px;height:16px;border-radius:2px;background:linear-gradient(135deg,#f0a040,#d96a0c)"></div>
  <div class="t" style="left:9.5px;top:11px;font-size:6px;line-height:6px;font-weight:bold;color:#fbe9cf">PDF</div>
  <div class="t" style="left:29.5px;top:9.5px;font-size:12px;line-height:12px;letter-spacing:-0.35px;color:#9a9a9a">PDF转图片</div>
  <div class="abs" style="left:20px;top:58px;width:300px;height:103px;border:1px solid #dadada;border-radius:3px"></div>
  <div class="t" style="left:28px;top:53.5px;padding:0 2px;background:#f3f3f3;line-height:13px">输出范围</div>
  <div class="abs" style="left:30px;top:81px;width:13px;height:13px;border-radius:50%;border:1px solid #8a8a8a;background:#f7f7f7"></div>
  <div class="abs" style="left:30px;top:108px;width:13px;height:13px;border-radius:50%;border:4px solid #0f64c0;background:#fff"></div>
  <div class="abs" style="left:30px;top:135px;width:13px;height:13px;border-radius:50%;border:1px solid #8a8a8a;background:#f7f7f7"></div>
  <div class="t" style="left:49px;top:82.5px;line-height:13px">当前页 &nbsp;&nbsp;(第</div>
  <div class="t" style="left:49px;top:109.5px;line-height:13px">所有页 &nbsp;&nbsp;(共</div>
  <div class="t" style="left:49px;top:136.5px;line-height:13px">页面范围:</div>
  <div class="abs" style="left:20px;top:186px;width:300px;height:79px;border:1px solid #dadada;border-radius:3px"></div>
  <div class="t" style="left:28px;top:181.5px;padding:0 2px;background:#f3f3f3;line-height:13px">输出设置</div>
  <div class="t" style="left:30px;top:211.5px;line-height:13px">输出格式:</div>
  <div class="abs" style="left:96px;top:205px;width:200px;height:22px;background:#fbfbfb;border:1px solid #d6d6d6;border-radius:4px"></div>
  <div class="t" style="left:101px;top:210.5px;font-size:13px;line-height:13px">png</div>
  <div class="t" style="left:30px;top:240.5px;line-height:13px">输出质量:</div>
  <div class="abs" style="left:96px;top:234px;width:200px;height:22px;background:#fbfbfb;border:1px solid #d6d6d6;border-radius:4px"></div>
  <div class="t" style="left:101px;top:240.5px;line-height:13px">高</div>
  <div class="t" style="left:20px;top:289.5px;line-height:13px">输出目录:</div>
  <div class="abs" style="left:86px;top:284px;width:180px;height:21px;background:#fbfbfb;border:1px solid #d6d6d6;border-radius:4px;overflow:hidden">
    <div class="t" style="left:-7.5px;top:4.5px;font-size:13px;line-height:13px">Users</div>
  </div>
  <div class="abs" style="left:243px;top:331px;width:76px;height:24px;background:#fdfdfd;border:1px solid #c8c8c8;border-radius:4px"></div>
</div>

<!-- ===== FILE EXPLORER WINDOW ===== -->
<div id="exp" class="abs" style="left:901px;top:201.5px;width:812px;height:460px;border-radius:8px;background:#fff;overflow:hidden;box-shadow:0 0 0 1px rgba(60,70,80,.45),0 22px 56px rgba(0,0,0,.36),0 2px 10px rgba(0,0,0,.2);color:#1b1b1b;font-size:12px">
  <div class="abs" style="left:0;top:0;width:812px;height:39px;background:#cfdeed"></div>
  <div class="abs" style="left:8px;top:8px;width:240px;height:31px;background:#eff4f9;border-radius:8px 8px 0 0"></div>
  <div class="abs" style="left:0;top:39px;width:812px;height:49.5px;background:#eff4f9"></div>
  <div class="abs" style="left:248px;top:31px;width:8px;height:8px;background:radial-gradient(circle at 100% 0,rgba(239,244,249,0) 7.4px,#eff4f9 8px)"></div>
  <div class="abs" style="left:0;top:31px;width:8px;height:8px;background:radial-gradient(circle at 0 0,rgba(239,244,249,0) 7.4px,#eff4f9 8px)"></div>
  <div class="abs" style="left:0;top:88px;width:812px;height:1px;background:#c4d4e6"></div>
  <div class="abs" style="left:0;top:89px;width:812px;height:46px;background:#fefeff"></div>
  <div class="abs" style="left:0;top:135px;width:812px;height:1px;background:#c9d9ea"></div>
  <!-- tab -->
  <svg style="left:16px;top:14px" width="18" height="16" viewBox="0 0 18 16"><path d="M1 3.2 Q1 2 2.2 2 H6.4 L8.4 4 H15.6 Q16.8 4 16.8 5.2 V12.8 Q16.8 14 15.6 14 H2.2 Q1 14 1 12.8 Z" fill="#e9a825"/><path d="M1 6 Q1 5 2 5 H15.8 Q16.8 5 16.8 6 V12.8 Q16.8 14 15.6 14 H2.2 Q1 14 1 12.8 Z" fill="#ffd466"/></svg>
  <div class="t" style="left:42.5px;top:18px;font-size:12px;line-height:13px;letter-spacing:0.15px">convert_pic</div>
  <svg style="left:221px;top:18px" width="11" height="11" viewBox="0 0 11 11" stroke="#222" stroke-width="1.1"><path d="M1.2 1.2 L9.8 9.8 M9.8 1.2 L1.2 9.8"/></svg>
  <svg style="left:264.5px;top:18px" width="12" height="12" viewBox="0 0 12 12" stroke="#222" stroke-width="1"><path d="M6 0.8 V11.2 M0.8 6 H11.2"/></svg>
  <!-- window buttons -->
  <svg style="left:688px;top:4px" width="118" height="22" viewBox="688 4 118 22" fill="none" stroke="#111" stroke-width="1.1"><path d="M693.6 15 H703.6"/><rect x="738.6" y="10" width="9.6" height="9.6" rx="1.4"/><path d="M784.2 10 L794 19.8 M794 10 L784.2 19.8"/></svg>
  <!-- nav row -->
  <svg style="left:0;top:48px" width="200" height="32" viewBox="0 48 200 32" fill="none" stroke-width="1.2" stroke-linecap="round" stroke-linejoin="round">
    <path d="M33 63.5 H21.4 M26.6 58.2 L21.2 63.5 L26.6 68.8" stroke="#a2a6ab"/>
    <path d="M69 63.5 H80.6 M75.4 58.2 L80.8 63.5 L75.4 68.8" stroke="#a2a6ab"/>
    <path d="M122.6 69.4 V57.8 M117.3 63 L122.6 57.6 L127.9 63" stroke="#1f1f1f"/>
    <path d="M176.4 63.6 A5.6 5.6 0 1 1 174.6 59.4 M174.8 56 V59.6 H171.2" stroke="#1f1f1f"/>
  </svg>
  <div class="abs" style="left:201px;top:48px;width:426px;height:31px;background:#f9fbfd;border-radius:4px"></div>
  <div class="abs" style="left:635px;top:48px;width:166px;height:31px;background:#f9fbfd;border-radius:4px"></div>
  <svg style="left:213px;top:55px" width="18" height="16" viewBox="0 0 18 16" fill="none" stroke="#333" stroke-width="1.2" stroke-linejoin="round"><rect x="1.6" y="1.6" width="14.4" height="10.2" rx="1.6"/><path d="M6 14.6 H11.8 M7.2 12 V14.4 M10.6 12 V14.4"/></svg>
  <svg style="left:248px;top:58px" width="8" height="10" viewBox="0 0 8 10" fill="none" stroke="#333" stroke-width="1.1"><path d="M2 1.2 L6 5 L2 8.8"/></svg>
  <div class="t" style="left:274px;top:57px;font-size:13px;line-height:14px">桌面</div>
  <svg style="left:317.5px;top:58px" width="8" height="10" viewBox="0 0 8 10" fill="none" stroke="#333" stroke-width="1.1"><path d="M2 1.2 L6 5 L2 8.8"/></svg>
  <div class="t" style="left:343px;top:57px;font-size:13px;line-height:14px;letter-spacing:0.3px">convert_pic</div>
  <div class="t" style="left:650px;top:57px;font-size:13px;line-height:14px;color:#666;letter-spacing:0.25px">在 convert_pic 中</div>
  <svg style="left:775px;top:57px" width="14" height="14" viewBox="0 0 14 14" fill="none" stroke="#444" stroke-width="1.1"><circle cx="5.6" cy="5.6" r="3.8"/><path d="M8.4 8.4 L12.2 12.2"/></svg>
  <!-- command bar -->
  <svg style="left:0;top:89px" width="812" height="46" viewBox="0 89 812 46" fill="none" stroke-width="1.1" stroke-linecap="round" stroke-linejoin="round">
    <circle cx="25.2" cy="112.4" r="6.8" stroke="#333"/><path d="M25.2 109 V115.8 M21.8 112.4 H28.6" stroke="#0a6cd6"/>
    <path d="M72.4 111 L75.2 113.4 L78 111" stroke="#666" stroke-width="0.9"/>
    <path d="M95.6 98 V126 M388.4 98 V126 M571.6 98 V126" stroke="#e2e2e2" stroke-width="1"/>
    <!-- cut -->
    <path d="M117.6 105.6 L123.4 116.2 M125.6 105.6 L119.8 116.2" stroke="#b5b5b5"/><circle cx="117.6" cy="118" r="2.1" stroke="#8cc0ee"/><circle cx="125.8" cy="118" r="2.1" stroke="#8cc0ee"/>
    <!-- copy -->
    <path d="M166.6 109.6 H165.4 Q164.2 109.6 164.2 110.8 V117.6 Q164.2 118.8 165.4 118.8 H170.2 Q171.4 118.8 171.4 117.6" stroke="#b5b5b5"/><rect x="167.4" y="106" width="7.6" height="9.6" rx="1.4" stroke="#8cc0ee"/>
    <!-- paste -->
    <path d="M215.6 119.4 H213.4 Q212.2 119.4 212.2 118.2 V108.4 Q212.2 107.2 213.4 107.2 H221 Q222.2 107.2 222.2 108.4 V109.6 M215.2 106 H219.4 V108.2 H215.2 Z" stroke="#b5b5b5"/><rect x="217" y="111" width="7" height="9" rx="1.2" stroke="#8cc0ee"/>
    <!-- rename -->
    <path d="M272.8 107.8 H274.6 Q276 107.8 276 109.2 V116 Q276 117.4 274.6 117.4 H272.8 M267.4 117.4 H260.6 Q259.2 117.4 259.2 116 V109.2 Q259.2 107.8 260.6 107.8 H267.4" stroke="#b5b5b5"/><path d="M270.2 105 V120 M268.4 105 H272 M268.4 120 H272" stroke="#8cc0ee"/>
    <!-- share -->
    <path d="M311.8 108.6 H309.6 Q308.2 108.6 308.2 110 V117.6 Q308.2 119 309.6 119 H317.4 Q318.8 119 318.8 117.6 V116.6" stroke="#b5b5b5"/><path d="M316.6 106.2 L321.2 110.4 L316.6 114.6 V112.2 Q312.8 112 311 115.6 Q311.2 109.2 316.6 108.6 Z" stroke="#8cc0ee"/>
    <!-- delete -->
    <path d="M356 108 H368.4 M360 107.8 Q360 105.8 362.2 105.8 Q364.4 105.8 364.4 107.8 M357.4 108.2 L358.4 118.6 Q358.6 119.8 359.8 119.8 H364.6 Q365.8 119.8 366 118.6 L367 108.2 M360.8 111 V116.8 M363.6 111 V116.8" stroke="#b5b5b5"/>
    <!-- sort -->
    <path d="M409.6 118.4 V107 M406.4 110.2 L409.6 106.8 L412.8 110.2" stroke="#333"/><path d="M416.4 106.6 V118 M413.2 114.8 L416.4 118.2 L419.6 114.8" stroke="#0a6cd6"/>
    <path d="M459 111 L461.8 113.4 L464.6 111" stroke="#666" stroke-width="0.9"/>
    <!-- view -->
    <rect x="497" y="107.6" width="10.6" height="8.4" rx="1.2" stroke="#333"/><path d="M497.4 118.8 H507.2" stroke="#333"/>
    <path d="M548 111 L550.8 113.4 L553.6 111" stroke="#666" stroke-width="0.9"/>
    <circle cx="589.4" cy="113.2" r="1.1" fill="#111" stroke="none"/><circle cx="596" cy="113.2" r="1.1" fill="#111" stroke="none"/><circle cx="602.6" cy="113.2" r="1.1" fill="#111" stroke="none"/>
    <!-- preview -->
    <rect x="743.6" y="107.6" width="14.4" height="10.6" rx="2.2" stroke="#333"/><path d="M752.4 107.6 V118.2 H755.8 Q758 118.2 758 116 V109.8 Q758 107.6 755.8 107.6 Z" stroke="#0a6cd6"/>
  </svg>
  <div class="t" style="left:261.6px;top:108.6px;font-size:8px;line-height:8px;color:#b5b5b5">A</div>
  <div class="t" style="left:41px;top:107.5px;line-height:13px;letter-spacing:0.4px">新建</div>
  <div class="t" style="left:429px;top:107.5px;line-height:13px;letter-spacing:0.4px">排序</div>
  <div class="t" style="left:518px;top:107.5px;line-height:13px;letter-spacing:0.4px">查看</div>
  <div class="t" style="left:766px;top:107.5px;line-height:13px;letter-spacing:0.4px">预览</div>
  <!-- nav pane -->
  <div class="abs" style="left:140px;top:136px;width:16px;height:298px;background:#f1f1f1"></div>
  <div class="abs" style="left:147px;top:177px;width:2px;height:101px;background:#8b8b8b;border-radius:1px"></div>
  <div class="abs" style="left:2px;top:136px;width:137px;height:31px;background:#e1e1e1;border:1px solid #9c9c9c;border-right:none"></div>
  <svg style="left:12px;top:145px" width="8" height="12" viewBox="0 0 8 12" fill="none" stroke="#666" stroke-width="1.1"><path d="M2 2 L6 6 L2 10"/></svg>
  <svg style="left:32px;top:143px" width="20" height="14" viewBox="0 0 20 14"><path d="M5.4 12.4 Q1.2 12.4 1.2 8.8 Q1.2 5.8 4.2 5.4 Q5.2 2 8.8 2 Q11.6 2 12.8 4.4 Q13.4 4.2 14.2 4.2 Q18.6 4.4 18.6 8.4 Q18.6 12.4 14.6 12.4 Z" fill="#1b8ae6"/><path d="M5.4 12.4 Q1.2 12.4 1.2 8.8 Q1.2 5.8 4.2 5.4 L10.8 9.4 L7.6 12.4 Z" fill="#0f5fc4"/><path d="M12.8 4.4 Q13.4 4.2 14.2 4.2 Q18.6 4.4 18.6 8.4 Q18.6 12.4 14.6 12.4 H7.6 Z" fill="#39b0f4"/></svg>
  <div class="abs" style="left:55px;top:144.5px;width:84.5px;height:16px;overflow:hidden"><div class="t" style="left:0;top:0;font-size:12px;line-height:14px;letter-spacing:0.45px">OneDrive - Personal</div></div>
  <div class="abs" style="left:140px;top:136px;width:16px;height:32px;background:#f1f1f1"></div>
  <div class="abs" style="left:10px;top:183.5px;width:121px;height:1px;background:#dcdcdc"></div>
  <div class="t" style="left:55.0px;top:208.5px;line-height:14px;letter-spacing:0.1px">桌面</div>
  <svg style="left:119.0px;top:203.5px" width="24" height="24" viewBox="0 0 24 24"><path d="M12.7 6.9 L17 11.2 L13.7 12.9 L12.6 16.5 L10.4 14.4 L7.2 17.4 L6.6 16.8 L9.6 13.6 L7.4 11.4 L10.8 10.2 Z" fill="#929ea6" stroke="#929ea6" stroke-width="0.5" stroke-linejoin="round"/></svg>
  <div class="t" style="left:55.0px;top:240.5px;line-height:14px;letter-spacing:0.1px">下载</div>
  <svg style="left:119.0px;top:235.5px" width="24" height="24" viewBox="0 0 24 24"><path d="M12.7 6.9 L17 11.2 L13.7 12.9 L12.6 16.5 L10.4 14.4 L7.2 17.4 L6.6 16.8 L9.6 13.6 L7.4 11.4 L10.8 10.2 Z" fill="#929ea6" stroke="#929ea6" stroke-width="0.5" stroke-linejoin="round"/></svg>
  <div class="t" style="left:55.0px;top:272.5px;line-height:14px;letter-spacing:0.1px">文档</div>
  <svg style="left:119.0px;top:267.5px" width="24" height="24" viewBox="0 0 24 24"><path d="M12.7 6.9 L17 11.2 L13.7 12.9 L12.6 16.5 L10.4 14.4 L7.2 17.4 L6.6 16.8 L9.6 13.6 L7.4 11.4 L10.8 10.2 Z" fill="#929ea6" stroke="#929ea6" stroke-width="0.5" stroke-linejoin="round"/></svg>
  <div class="t" style="left:55.0px;top:304.5px;line-height:14px;letter-spacing:0.1px">图片</div>
  <svg style="left:119.0px;top:299.5px" width="24" height="24" viewBox="0 0 24 24"><path d="M12.7 6.9 L17 11.2 L13.7 12.9 L12.6 16.5 L10.4 14.4 L7.2 17.4 L6.6 16.8 L9.6 13.6 L7.4 11.4 L10.8 10.2 Z" fill="#929ea6" stroke="#929ea6" stroke-width="0.5" stroke-linejoin="round"/></svg>
  <div class="t" style="left:55.0px;top:336.7px;line-height:14px;letter-spacing:0.1px">音乐</div>
  <svg style="left:119.0px;top:331.7px" width="24" height="24" viewBox="0 0 24 24"><path d="M12.7 6.9 L17 11.2 L13.7 12.9 L12.6 16.5 L10.4 14.4 L7.2 17.4 L6.6 16.8 L9.6 13.6 L7.4 11.4 L10.8 10.2 Z" fill="#929ea6" stroke="#929ea6" stroke-width="0.5" stroke-linejoin="round"/></svg>
  <div class="t" style="left:55.0px;top:368.7px;line-height:14px;letter-spacing:0.1px">视频</div>
  <svg style="left:119.0px;top:363.7px" width="24" height="24" viewBox="0 0 24 24"><path d="M12.7 6.9 L17 11.2 L13.7 12.9 L12.6 16.5 L10.4 14.4 L7.2 17.4 L6.6 16.8 L9.6 13.6 L7.4 11.4 L10.8 10.2 Z" fill="#929ea6" stroke="#929ea6" stroke-width="0.5" stroke-linejoin="round"/></svg>
  <div class="t" style="left:55.0px;top:400.7px;line-height:14px;letter-spacing:0.1px">回收站</div>
  <svg style="left:119.0px;top:395.7px" width="24" height="24" viewBox="0 0 24 24"><path d="M12.7 6.9 L17 11.2 L13.7 12.9 L12.6 16.5 L10.4 14.4 L7.2 17.4 L6.6 16.8 L9.6 13.6 L7.4 11.4 L10.8 10.2 Z" fill="#929ea6" stroke="#929ea6" stroke-width="0.5" stroke-linejoin="round"/></svg>
  <svg style="left:34.0px;top:208.5px" width="16" height="14" viewBox="0 0 16 14"><defs><linearGradient id="gd" x1="0" y1="0" x2="1" y2="1"><stop offset="0" stop-color="#35c3dc"/><stop offset="1" stop-color="#0c74bd"/></linearGradient></defs><rect x="0" y="1" width="16" height="11.8" rx="1.6" fill="url(#gd)"/><rect x="2" y="3.2" width="1.8" height="1.6" fill="#fff"/><rect x="2" y="6" width="1.8" height="1.6" fill="#fff"/></svg>
  <svg style="left:35.0px;top:238.5px" width="14" height="18" viewBox="0 0 14 18"><path d="M7 1.4 V11.6 M2.4 7.2 L7 11.8 L11.6 7.2 M1.4 16 H12.6" fill="none" stroke="#1cb78a" stroke-width="1.6" stroke-linecap="round" stroke-linejoin="round"/></svg>
  <svg style="left:35.0px;top:270.5px" width="14" height="18" viewBox="0 0 14 18"><defs><linearGradient id="gdoc" x1="0" y1="0" x2="1" y2="1"><stop offset="0" stop-color="#b4c6de"/><stop offset="1" stop-color="#748fb2"/></linearGradient></defs><rect x="1" y="1" width="12" height="16" rx="1.4" fill="url(#gdoc)"/><path d="M3.2 5.2 H6.6 M3.2 7.4 H10.8 M3.2 9.6 H10.8 M3.2 11.8 H10.8" stroke="#fff" stroke-width="1.1"/><rect x="7.6" y="4" width="3.2" height="2" fill="#fff"/></svg>
  <svg style="left:34.0px;top:303.5px" width="16" height="16" viewBox="0 0 16 16"><rect x="1" y="1" width="14" height="14" rx="1.8" fill="#1c88de"/><path d="M2.2 14 L8 7.4 L13.8 14 Z" fill="#fff"/><circle cx="11.2" cy="4.4" r="1.2" fill="#fff"/></svg>
  <svg style="left:33.0px;top:334.5px" width="18" height="18" viewBox="0 0 18 18"><defs><linearGradient id="gm" x1="0" y1="0" x2="1" y2="1"><stop offset="0" stop-color="#f4904a"/><stop offset="1" stop-color="#a95bb2"/></linearGradient></defs><circle cx="9" cy="9" r="7.9" fill="url(#gm)"/><path d="M9.8 4.4 V11" stroke="#fff" stroke-width="1.3" fill="none"/><path d="M9.8 4.4 L12.2 5.4 V7 L9.8 6 Z" fill="#fff"/><ellipse cx="8.4" cy="11.2" rx="1.9" ry="1.5" fill="#fff"/></svg>
  <svg style="left:34.0px;top:366.5px" width="16" height="18" viewBox="0 0 16 18"><rect x="1" y="1.4" width="14" height="15" rx="1.6" fill="#8a45d6"/><path d="M5.6 5.6 L11.2 9 L5.6 12.4 Z" fill="#fff"/><path d="M2.8 3 V15 M13.2 3 V15" stroke="#3b1d70" stroke-width="1.3" stroke-dasharray="1.4 1.8"/></svg>
  <svg style="left:35.0px;top:398.5px" width="14" height="17" viewBox="0 0 14 17"><path d="M1.4 2.4 H12.6 L11.4 15 Q11.3 15.8 10.4 15.8 H3.6 Q2.7 15.8 2.6 15 Z" fill="#eef3f7" stroke="#b9c4cd" stroke-width="0.8"/><path d="M1.2 2.2 H12.8" stroke="#cfd6dc" stroke-width="1.2"/><path d="M5.2 8 A2.4 2.4 0 0 1 9.2 7.4 M9.4 9.8 A2.4 2.4 0 0 1 5.2 10.4" stroke="#1f86dc" stroke-width="1.3" fill="none"/></svg>
  <div class="abs" style="left:34.0px;top:432.1px;width:8px;height:2px;background:#f2b21c;border-radius:2px 2px 0 0"></div>

  <!-- content -->
  <div class="abs" style="left:180.4px;top:171.5px;width:90px;height:64.4px;background:#fff;box-shadow:0 0 0 0.5px rgba(0,0,0,.10),1px 1.5px 3px rgba(0,0,0,.32)"></div>
  <svg style="left:180.4px;top:171.5px" width="90" height="64" viewBox="0 0 90 64" fill="none" stroke="#c9c9c9" stroke-width="0.5"><path d="M20 12 V26 M28 9 V53 M28 16 L38 17 L48 14 L58 13 L66 15 L76 11 M38 17 V27 M48 14 V27 M58 13 V27 M66 15 V27 M76 11 V27"/><rect x="13" y="27" width="9" height="26"/><path d="M13 31 H22 M13 35 H22 M13 39 H22 M13 42 H22 M13 45 H22 M13 48 H22"/><path d="M23 27 H76 M23 31 H76 M23 35 H76 M23 39 H76 M23 42 H76 M23 45 H76 M23 49 H76 M23 53 H76 M38 39 V53 M48 39 V53 M58 39 V53 M66 39 V53 M76 27 V53"/><path d="M42 61 H52 M57 61.5 H67" stroke="#bbb"/></svg>
  <div class="t" style="left:170.8px;top:241.1px;width:110px;text-align:center;line-height:17px;color:#111;letter-spacing:0.05px">2、雨污水管道立<br>面图_高_p1</div>
  <div class="abs" style="left:286.2px;top:171.5px;width:90px;height:64.4px;background:#fff;box-shadow:0 0 0 0.5px rgba(0,0,0,.10),1px 1.5px 3px rgba(0,0,0,.32)"></div>
  <svg style="left:286.2px;top:171.5px" width="90" height="64" viewBox="0 0 90 64" fill="none" stroke="#c9c9c9" stroke-width="0.5"><path d="M19 8 V26 M22 9 V53 M22 11 L30 10 L40 8.5 L48 9 L58 8 L70 5 M30 10 V27 M40 8.5 V27 M48 9 V27 M58 8 V27 M70 5 V27"/><rect x="11" y="27" width="9" height="26"/><path d="M11 31 H20 M11 35 H20 M11 39 H20 M11 42 H20 M11 45 H20 M11 48 H20"/><path d="M21 27 H71 M21 31 H71 M21 35 H71 M21 39 H71 M21 42 H71 M21 45 H71 M21 49 H71 M21 53 H71 M30 39 V53 M40 39 V53 M48 39 V53 M58 39 V53 M71 27 V53"/><path d="M38 55.5 H50 M58 56 H68" stroke="#bbb"/></svg>
  <div class="t" style="left:276.6px;top:241.1px;width:110px;text-align:center;line-height:17px;color:#111;letter-spacing:0.05px">2、雨污水管道立<br>面图_高_p2</div>
  <div class="abs" style="left:164.3px;top:161.6px;width:239.6px;height:124.7px;border:3.6px solid #f74a50;border-radius:2px"></div>

  <!-- status -->
  <div class="abs" style="left:0;top:434px;width:812px;height:26px;background:#fff"></div>
  <div class="t" style="left:14px;top:441px;line-height:13px;color:#17406f">2 个项目</div>
  <div class="abs" style="left:71px;top:438px;width:1px;height:17px;background:#efefef"></div>
  <svg style="left:760px;top:440px" width="16" height="14" viewBox="0 0 16 14" stroke="#555" stroke-width="1.1"><path d="M2.2 3.4 H14 M2.2 6.4 H14 M2.2 9.4 H14 M2.2 12.4 H14"/></svg>
  <div class="abs" style="left:782px;top:434.5px;width:26px;height:25.5px;background:#e5f3fb;border:1px solid #0a6cd6"></div>
  <svg style="left:787px;top:440px" width="16" height="14" viewBox="0 0 16 14" fill="none" stroke="#555" stroke-width="1.1"><rect x="2.6" y="3" width="11" height="8.4" fill="#fff"/><path d="M2.4 13.6 H13.8"/></svg>
</div>

</body>
</html>
